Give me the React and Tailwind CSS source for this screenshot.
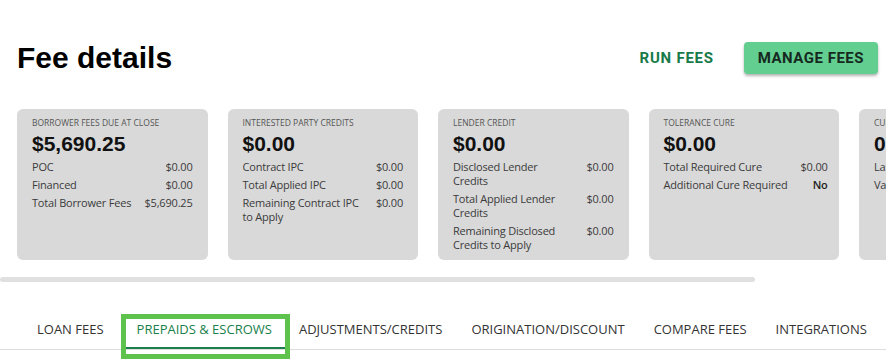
import React from 'react';

const cards = [
  {
    title: 'Borrower fees due at close',
    amount: '$5,690.25',
    rows: [
      ['POC', '$0.00'],
      ['Financed', '$0.00'],
      ['Total Borrower Fees', '$5,690.25'],
    ],
  },
  {
    title: 'Interested party credits',
    amount: '$0.00',
    rows: [
      ['Contract IPC', '$0.00'],
      ['Total Applied IPC', '$0.00'],
      ['Remaining Contract IPC to Apply', '$0.00'],
    ],
  },
  {
    title: 'Lender credit',
    amount: '$0.00',
    rows: [
      ['Disclosed Lender Credits', '$0.00'],
      ['Total Applied Lender Credits', '$0.00'],
      ['Remaining Disclosed Credits to Apply', '$0.00'],
    ],
  },
  {
    title: 'Tolerance cure',
    amount: '$0.00',
    rows: [
      ['Total Required Cure', '$0.00'],
      ['Additional Cure Required', 'No', true],
    ],
  },
  {
    title: 'Current APR',
    amount: '0.000%',
    rows: [
      ['Last Disclosed APR', '0.000%'],
      ['Variance', '0.000%'],
    ],
  },
];

const tabs = ['LOAN FEES', 'PREPAIDS & ESCROWS', 'ADJUSTMENTS/CREDITS', 'ORIGINATION/DISCOUNT', 'COMPARE FEES', 'INTEGRATIONS'];

function SummaryCard({ card }) {
  return (
    <div className="w-[190.5px] h-[151px] shrink-0 rounded-md bg-[#d9d9d9] px-[15px] pt-[8px]">
      <div className="text-[8.5px] leading-[12px] uppercase text-[#555]">{card.title}</div>
      <div className="mt-[3px] text-[21px] leading-[24px] font-bold text-[#111] font-['Liberation_Sans',Arial,sans-serif]">
        {card.amount}
      </div>
      <table className="mt-[2px] w-full border-collapse text-[11px] leading-[14px] tracking-[-0.2px] text-[#3b3b3b]">
        <tbody>
          {card.rows.map(([label, value, strong]) => (
            <tr key={label}>
              <td className={`py-[2px] align-top ${strong ? 'whitespace-nowrap' : ''}`}>{label}</td>
              <td className={`py-[2px] align-top text-right whitespace-nowrap ${strong ? 'pl-[8px] font-semibold text-[#222]' : 'pl-[13px]'}`}>
                {value}
              </td>
            </tr>
          ))}
        </tbody>
      </table>
    </div>
  );
}

export default function App() {
  return (
    <div className="w-[886px] h-[360px] overflow-hidden bg-white font-['Open_Sans',sans-serif]">
      <div className="flex items-center justify-between pl-[17px] pr-[8px] pt-[40px]">
        <h1 className="text-[30px] leading-[36px] font-bold text-black font-['Liberation_Sans',Arial,sans-serif]">
          Fee details
        </h1>
        <div className="flex items-center gap-[15px] font-['Roboto',sans-serif]">
          <button className="px-[15px] py-[6px] text-[15px] font-bold tracking-[0.75px] text-[#177a49]">
            RUN FEES
          </button>
          <button className="h-[32px] px-[14px] rounded bg-[#62ce90] text-[15px] font-bold tracking-[0.5px] text-[#16291f] shadow-[0_2px_3px_rgba(0,0,0,0.3)]">
            MANAGE FEES
          </button>
        </div>
      </div>

      <div className="mt-[33px] flex gap-5 overflow-hidden pl-[17px]">
        {cards.map((card) => (
          <SummaryCard key={card.title} card={card} />
        ))}
      </div>

      <div className="mt-[17px] h-[5px] w-[755px] rounded-full bg-[#e0e0e0]" />

      <div className="mt-[37px] flex border-b border-[#dddddd] pl-[22px] text-[13px] leading-[17px]">
        {tabs.map((tab, i) =>
          i === 1 ? (
            <div key={tab} className="relative ml-[8px] pl-[11px] pr-[13px] pt-[2px] pb-[11px] text-[#1a7f4c]">
              {tab}
              <div className="absolute bottom-0 left-0 right-0 h-[2px] bg-[#1a7f4c]" />
              <div className="absolute -left-[5px] -right-[5px] -top-[5px] -bottom-[10px] border-[5px] border-[#5ec34c]" />
            </div>
          ) : (
            <div key={tab} className={`${i === 2 ? 'pl-[14px]' : 'pl-[15px]'} pr-[14px] pt-[2px] pb-[11px] text-[#333]`}>
              {tab}
            </div>
          )
        )}
      </div>
    </div>
  );
}
